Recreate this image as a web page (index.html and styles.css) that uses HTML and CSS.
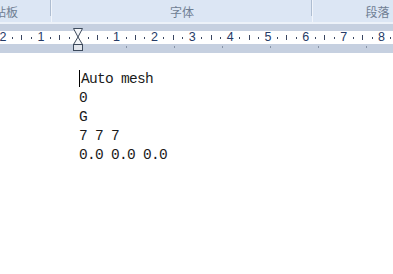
FILE: index.html
```html
<!DOCTYPE html>
<html lang="zh-CN">
<head>
  <meta charset="UTF-8">
  <title>Document</title>
  <link rel="stylesheet" href="styles.css">
</head>
<body>
  <div class="ribbon">
    <div class="group group-clip"><span class="group-label clipped">剪贴板</span></div>
    <div class="group group-font"><span class="group-label">字体</span></div>
    <div class="group group-para"><span class="group-label">段落</span></div>
  </div>
  <div class="ribbon-edge"></div>
  <div class="band"></div>

  <div class="ruler">
    <div class="ruler-track" id="ruler-track"></div>
    <svg class="indent-marker" width="11" height="24" viewBox="0 0 11 24">
      <polygon points="0.5,0.5 9.5,0.5 5,9" fill="#f4f6f9" stroke="#3d4a5c"/>
      <polygon points="5,9 0.5,16.5 9.5,16.5" fill="#f4f6f9" stroke="#3d4a5c"/>
      <rect x="0.5" y="16.5" width="9" height="6" fill="#e1e5ec" stroke="#3d4a5c"/>
    </svg>
  </div>

  <div class="band band-tabs">
    <span class="tab-stop"></span>
    <span class="tab-stop"></span>
    <span class="tab-stop"></span>
    <span class="tab-stop"></span>
    <span class="tab-stop"></span>
    <span class="tab-stop"></span>
  </div>

  <div class="page">
    <div class="line"><span class="caret"></span>Auto mesh</div>
    <div class="line">0</div>
    <div class="line">G</div>
    <div class="line">7 7 7</div>
    <div class="line">0.0 0.0 0.0</div>
  </div>

  <script>
    // Regua em centimetros: numero, ponto, traco, ponto
    const track = document.getElementById('ruler-track');
    for (let n = -2; n <= 8; n++) {
      const cell = document.createElement('div');
      cell.className = 'ruler-cm';
      const label = n === 0 ? '' : Math.abs(n);
      cell.innerHTML =
        '<span class="ruler-num">' + label + '</span>' +
        '<span class="ruler-mark"><i class="dot"></i></span>' +
        '<span class="ruler-mark"><i class="tick"></i></span>' +
        '<span class="ruler-mark"><i class="dot"></i></span>';
      track.appendChild(cell);
    }
  </script>
</body>
</html>
```

FILE: styles.css
```css
:root {
  --ribbon-bg: #dce6f4;
  --ribbon-label: #6f7e93;
  --band: #c6d0e0;
  --ruler-ink: #253a66;
}

* {
  margin: 0;
  padding: 0;
  box-sizing: border-box;
}

body {
  width: 393px;
  height: 274px;
  overflow: hidden;
  background-color: white;
  font-family: "Liberation Sans", Arial, sans-serif;
}

.ribbon {
  display: flex;
  height: 22px;
  background-color: var(--ribbon-bg);
  overflow: hidden;
}

.group {
  flex: none;
  display: flex;
  justify-content: center;
  border-right: 1px solid #f1f5fb;
  position: relative;
}

.group::after {
  content: "";
  position: absolute;
  right: 0;
  top: 0;
  width: 1px;
  height: 16px;
  background-color: #aebdd1;
}

.group-clip {
  width: 52px;
  justify-content: flex-start;
  overflow: hidden;
}

.group-font {
  width: 261px;
}

.group-para {
  width: 130px;
}

.group-para::after {
  display: none;
}

.group-label {
  font-family: "Noto Sans CJK SC", sans-serif;
  font-size: 12px;
  line-height: 12px;
  margin-top: 6px;
  color: var(--ribbon-label);
  white-space: nowrap;
}

.clipped {
  margin-left: -18px;
}

.ribbon-edge {
  height: 2px;
  background-color: #edf2f9;
}

.band {
  height: 7px;
  background-color: var(--band);
}

.ruler {
  position: relative;
  height: 13px;
  background-color: white;
  overflow: visible;
}

.ruler-track {
  display: flex;
  margin-left: -1.7px;
  height: 13px;
  overflow: hidden;
  width: 394.7px;
}

.ruler-cm {
  flex: none;
  width: 37.85px;
  display: grid;
  grid-template-columns: repeat(4, 1fr);
  align-items: center;
  justify-items: center;
}

.ruler-num {
  font-family: "Liberation Sans", Arial, sans-serif;
  font-size: 12.5px;
  line-height: 13px;
  color: var(--ruler-ink);
}

.ruler-mark {
  display: flex;
  align-items: center;
  height: 13px;
}

.dot {
  display: block;
  width: 1px;
  height: 2px;
  background-color: #3a4660;
}

.tick {
  display: block;
  width: 1px;
  height: 5px;
  background-color: #3a4660;
}

.indent-marker {
  position: absolute;
  left: 73px;
  top: -3px;
}

.band-tabs {
  height: 9px;
  display: flex;
  gap: 47px;
  padding-left: 126px;
  padding-top: 2px;
}

.tab-stop {
  width: 1px;
  height: 2px;
  background-color: #8793a6;
}

.page {
  padding-top: 17px;
  padding-left: 79px;
  font-family: "Liberation Mono", "Courier New", monospace;
  font-size: 14.5px;
  letter-spacing: -0.7px;
  line-height: 19px;
  color: #1a1a1a;
}

.line {
  white-space: pre;
}

.caret {
  display: inline-block;
  width: 1px;
  height: 17px;
  margin-right: 1px;
  background-color: black;
  vertical-align: -4px;
}
```
